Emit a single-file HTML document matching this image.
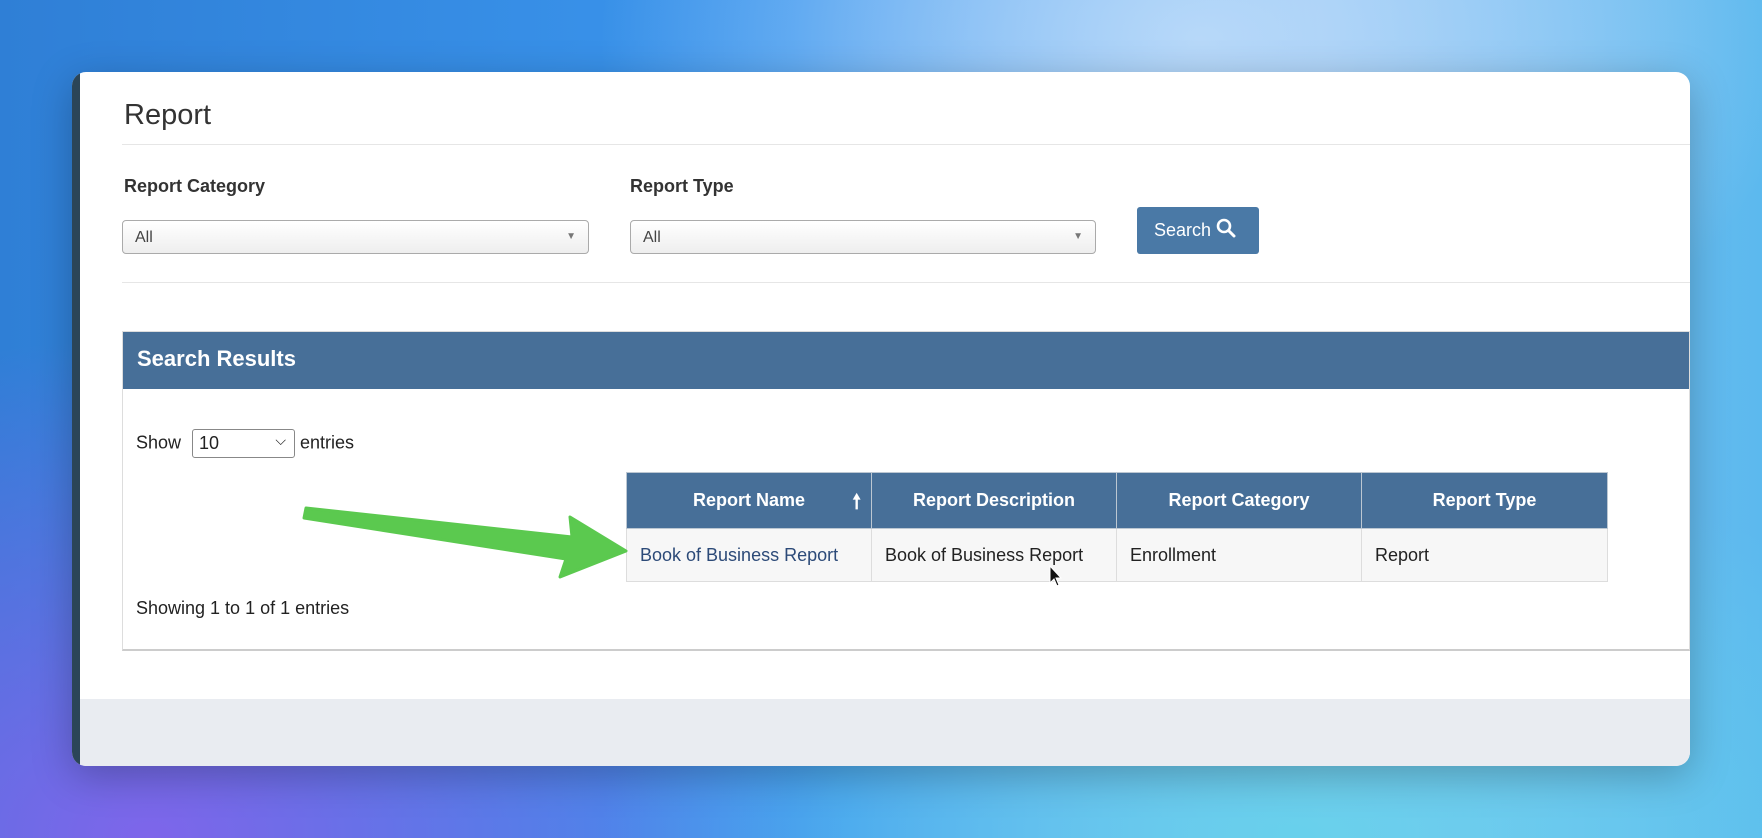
<!DOCTYPE html>
<html><head><meta charset="utf-8"><style>
*{margin:0;padding:0;box-sizing:border-box}
body{width:1762px;height:838px;overflow:hidden;position:relative;font-family:"Liberation Sans",Arial,sans-serif;
background:
radial-gradient(ellipse 600px 400px at 1200px 40px,rgba(190,220,250,.9),transparent),
radial-gradient(ellipse 700px 400px at 1300px 838px,rgba(100,210,235,.9),transparent),
radial-gradient(ellipse 700px 500px at 150px 838px,rgba(130,100,235,.95),transparent),
linear-gradient(90deg,#2f7fd6 0%,#3b96ee 45%,#8cc2f4 75%,#5cb9ee 100%);}
.win{position:absolute;left:72px;top:72px;width:1618px;height:694px;border-radius:14px;overflow:hidden;background:#fff;box-shadow:0 10px 40px rgba(0,0,0,.25)}
.strip{position:absolute;left:0;top:0;width:8px;height:100%;background:#2b4558}
.foot{position:absolute;left:8px;right:0;top:627px;bottom:0;background:#e9ecf1}
.a{position:absolute}
h1{position:absolute;left:52px;top:27px;font-size:29px;font-weight:normal;color:#333}
.hr{position:absolute;height:1px;background:#e6e6e6;left:50px;right:0}
.lbl{position:absolute;font-weight:bold;font-size:18px;color:#333}
.sel{position:absolute;height:34px;border:1px solid #aaa;border-radius:4px;background:linear-gradient(#fff,#eee);font-size:16px;color:#444;padding:8px 12px}
.sel span{position:absolute;right:12px;top:10px;font-size:10px;color:#777}
.btn{position:absolute;left:1065px;top:135px;width:122px;height:47px;background:#4a79a6;border-radius:3px;color:#fff;font-size:18px;line-height:47px;padding-left:17px}
.panel{position:absolute;left:50px;right:0;top:259px;height:320px;border:1px solid #ddd;border-bottom:2px solid #ccc}
.ph{height:57px;background:#476f98;color:#fff;font-weight:bold;font-size:22px;padding:14px 14px}
table{position:absolute;left:554px;top:400px;border-collapse:collapse;font-size:18px}
th{background:#476f98;color:#fff;height:56px;border:1px solid #bcc7d2;font-weight:bold}
td{height:53px;border:1px solid #ddd;background:#f7f7f7;padding:0 13px;color:#222}
</style></head><body>
<div class="win">
<div class="strip"></div>
<h1>Report</h1>
<div class="hr" style="top:72px"></div>
<div class="lbl" style="left:52px;top:104px">Report Category</div>
<div class="lbl" style="left:558px;top:104px">Report Type</div>
<div class="sel" style="left:50px;top:148px;width:467px">All<span>▼</span></div>
<div class="sel" style="left:558px;top:148px;width:466px">All<span>▼</span></div>
<div class="btn">Search <svg width="20" height="20" viewBox="0 0 20 20" style="vertical-align:-2px"><circle cx="8" cy="8" r="6" stroke="#fff" stroke-width="2.6" fill="none"/><path d="M12.5 12.5L18 18" stroke="#fff" stroke-width="3" stroke-linecap="round"/></svg></div>
<div class="hr" style="top:210px"></div>
<div class="panel"><div class="ph">Search Results</div></div>
<div class="a" style="left:64px;top:357px;font-size:18px;color:#222">Show <span style="display:inline-block;width:103px;height:29px;border:1px solid #888;border-radius:3px;vertical-align:middle;padding:3px 6px;position:relative;margin-left:6px">10<span style="position:absolute;right:8px;top:2px;font-size:14px">⌵</span></span> entries</div>
<table>
<tr><th style="width:245px;position:relative">Report Name<span style="position:absolute;right:10px;top:14px;font-size:20px">🠕</span></th><th style="width:245px">Report Description</th><th style="width:245px">Report Category</th><th style="width:246px">Report Type</th></tr>
<tr><td style="color:#2c4a78">Book of Business Report</td><td>Book of Business Report</td><td>Enrollment</td><td>Report</td></tr>
</table>
<div class="a" style="left:64px;top:526px;font-size:18px;color:#222">Showing 1 to 1 of 1 entries</div>
<div class="foot"></div>
</div>
<svg class="a" style="left:0;top:0" width="1762" height="838"><polygon points="306,508 572,537 570,517 626,551 560,577 566,559 304,518" fill="#5bc94f" stroke="#5bc94f" stroke-width="3" stroke-linejoin="round"/>
<path d="M1050 566l0 17 4-4 3 7 2-1-3-7 5 0z" fill="#111" stroke="#fff" stroke-width="1"/></svg>
</body></html>
